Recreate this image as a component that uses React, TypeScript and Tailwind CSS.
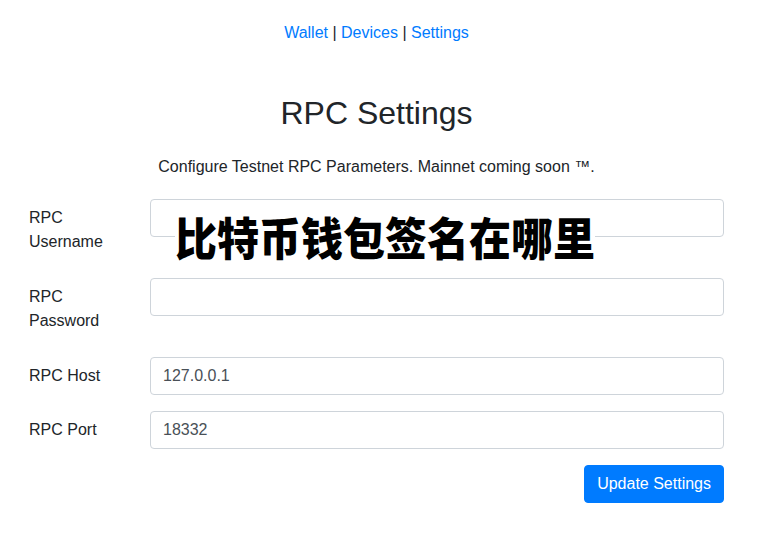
export default function App() {
  const rows = [
    { label: "RPC Username", value: "", gap: "mb-[17px]" },
    { label: "RPC Password", value: "", gap: "mb-[17px]" },
    { label: "RPC Host", value: "127.0.0.1", gap: "mb-4" },
    { label: "RPC Port", value: "18332", gap: "mb-4" },
  ];

  return (
    <div
      className="relative min-h-[554px] w-full bg-white text-[#212529] text-base leading-6"
      style={{ fontFamily: '"Liberation Sans", Arial, sans-serif' }}
    >
      <div className="pl-[29px] pr-[44px] pt-[21px]">
        {/* Nav */}
        <div className="text-center h-6">
          <a className="text-[#007bff]">Wallet</a> |{" "}
          <a className="text-[#007bff]">Devices</a> |{" "}
          <a className="text-[#007bff]">Settings</a>
        </div>

        {/* Title */}
        <h2 className="mt-[49px] text-center text-[32px] leading-[38px] font-normal">
          RPC Settings
        </h2>
        <p className="mt-[23px] text-center">
          Configure Testnet RPC Parameters. Mainnet coming soon ™.
        </p>

        {/* Form */}
        <form className="mt-[20px] flex flex-col">
          {rows.map((row) => (
            <div key={row.label} className={`flex items-start ${row.gap}`}>
              <label className="w-[121px] shrink-0 pr-4 py-[7px]">
                {row.label}
              </label>
              <input
                type="text"
                defaultValue={row.value}
                className="flex-1 h-[38px] px-3 py-[6px] border border-[#ced4da] rounded text-[#495057] bg-white outline-none"
              />
            </div>
          ))}
          <div className="flex justify-end">
            <button
              type="button"
              className="h-[38px] px-3 rounded bg-[#007bff] text-white border border-[#007bff]"
            >
              Update Settings
            </button>
          </div>
        </form>
      </div>

      {/* Overlay caption */}
      <div
        className="absolute left-[175px] top-[212px] bg-white text-black text-[42px] leading-[50px] font-black scale-y-[1.08] origin-center"
        style={{ fontFamily: '"Noto Sans CJK SC", sans-serif' }}
      >
        比特币钱包签名在哪里
      </div>
    </div>
  );
}
